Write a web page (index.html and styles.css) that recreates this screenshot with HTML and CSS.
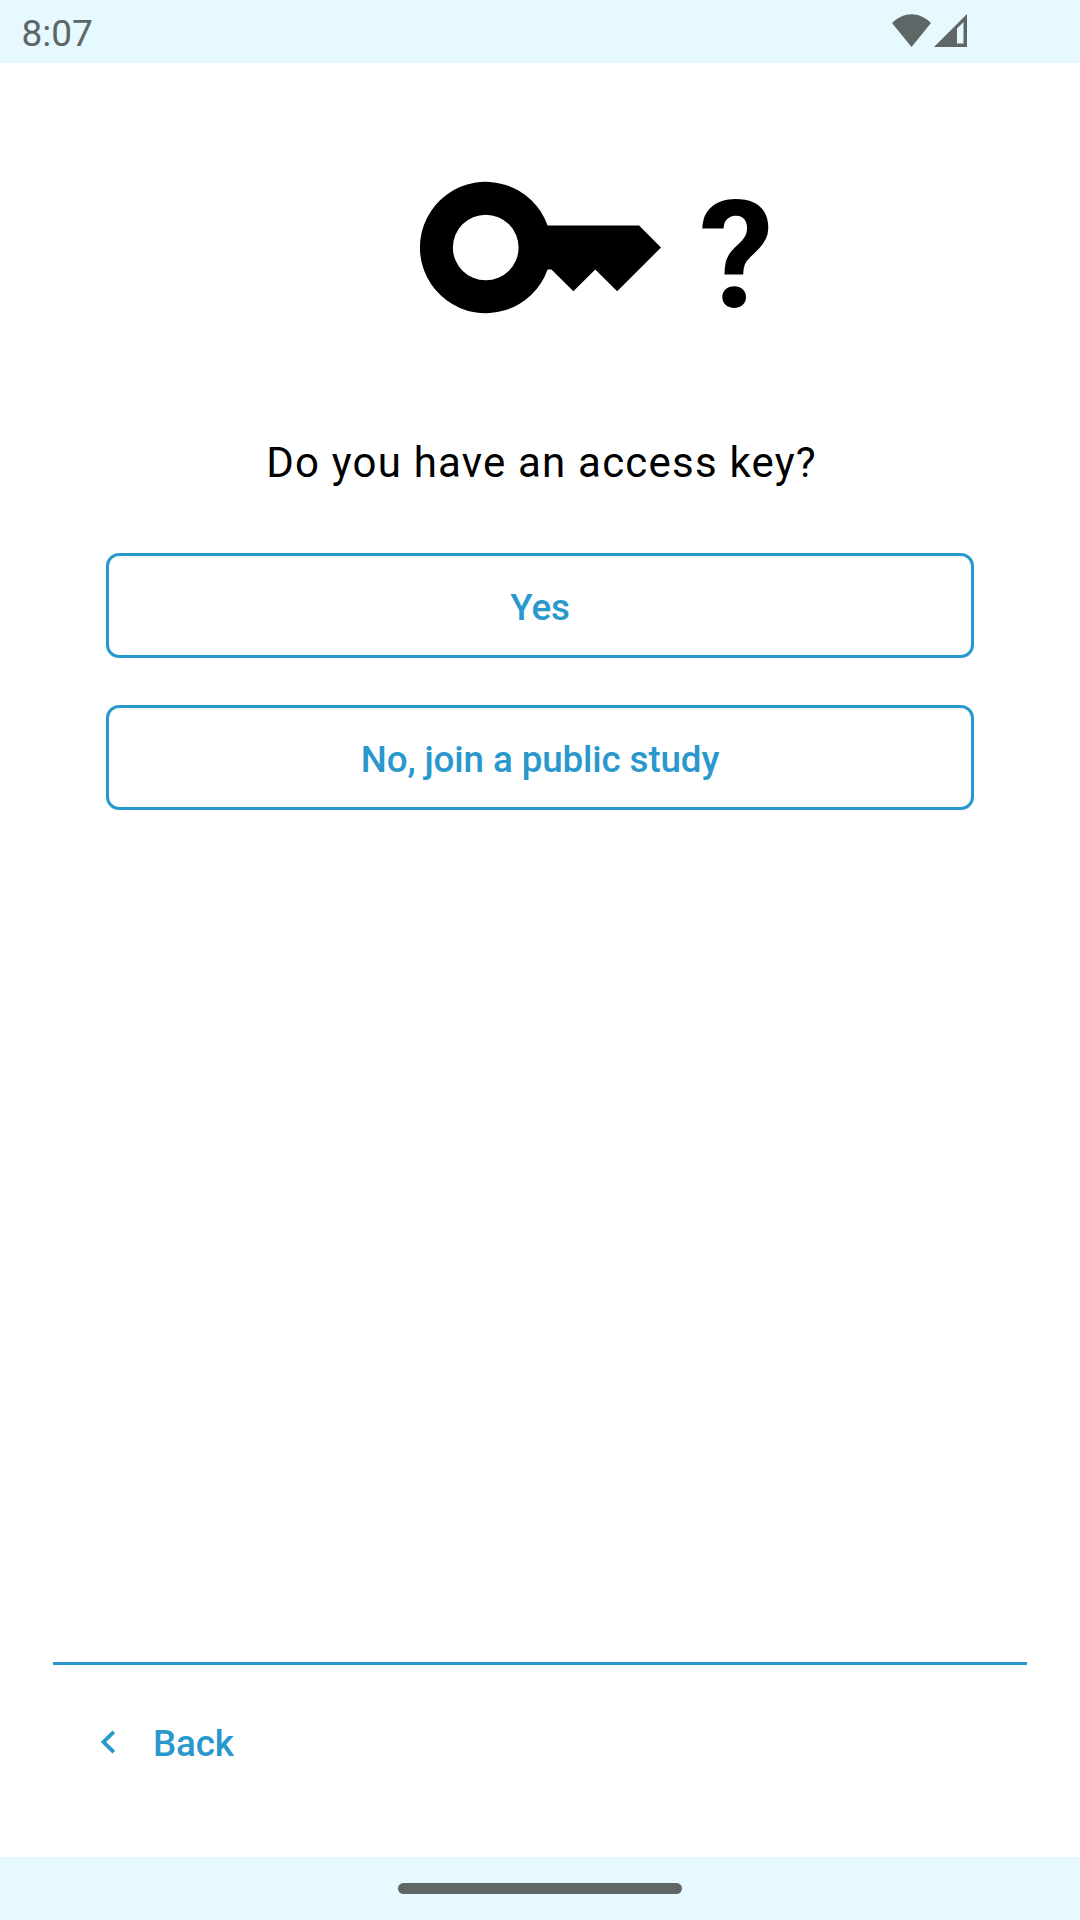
FILE: index.html
```html
<!DOCTYPE html>
<html lang="en">
<head>
<meta charset="utf-8">
<title>Access key</title>
<link rel="stylesheet" href="styles.css">
</head>
<body>
<div class="screen">
  <header class="status">
    <span class="clock">8:07</span>
    <div class="signals">
      <svg class="wifi" viewBox="0 0 39 33"><path d="M19.500 33 0 9C11.500-2.800 27.500-2.800 39 9Z"/></svg>
      <svg class="cell" viewBox="0 0 33 33"><path fill-rule="evenodd" d="M33 0V33H0ZM29.500 8 23 14.500V29.500H29.500Z"/></svg>
    </div>
  </header>
  <main class="content">
    <div class="hero">
      <svg class="key" viewBox="0 -0.045 22 12"><path fill-rule="evenodd" d="M11.650 4A6 6 0 1 0 11.650 8H12L14 10 16 8 18 10 22 6 20 4ZM6 9A3 3 0 1 1 6 3 3 3 0 0 1 6 9Z"/></svg>
      <span class="mark">?</span>
    </div>
    <h1 class="question">Do you have an access key?</h1>
    <div class="choices">
      <button class="choice">Yes</button>
      <button class="choice">No, join a public study</button>
    </div>
  </main>
  <footer class="footer">
    <button class="back">
      <svg class="chevron" viewBox="0 0 14 24"><path d="M12.800 1.800 2.500 12 12.800 22.200"/></svg>
      <span>Back</span>
    </button>
  </footer>
  <nav class="navbar"><span class="handle"></span></nav>
</div>
</body>
</html>
```
FILE: styles.css
```css
* { box-sizing: border-box; }
body { margin: 0; font-family: Roboto, sans-serif; }
svg { display: block; overflow: visible; }
.screen { display: flex; flex-direction: column; width: 1080px; height: 1920px; background: #fff; }
.status { height: 63px; background: #e5f9ff; padding: 0 113px 0 21.500px; display: flex; justify-content: space-between; color: #5f6666; }
.clock { font-size: 37px; line-height: 68px; }
.signals { display: flex; gap: 3px; padding-top: 14px; fill: #5f6666; }
.wifi { width: 39px; height: 33px; }
.cell { width: 33px; height: 33px; }
.content { flex: 1; padding: 118px 106px 0; }
.hero { display: flex; height: 132px; padding-left: 314px; }
.key { width: 241px; height: 132px; }
.mark { font-size: 150px; font-weight: 700; line-height: 150px; margin-left: 38px; }
.question { margin: 122px 0 0; padding-left: 3px; font-size: 42px; font-weight: 400; line-height: 56px; letter-spacing: 1.200px; text-align: center; }
.choices { display: flex; flex-direction: column; gap: 47px; margin-top: 62px; }
.choice { height: 105px; border: 3px solid #2998cc; border-radius: 13px; background: none; color: #2998cc; font: 500 36.750px/44px Roboto, sans-serif; letter-spacing: -0.120px; padding: 4px 0 0; }
.footer { height: 195px; margin: 0 53px; border-top: 3px solid #2998cc; }
.back { display: flex; align-items: center; margin: 55px 0 0 48px; padding: 0; border: 0; background: none; color: #2998cc; font: 500 36.750px/48px Roboto, sans-serif; letter-spacing: -0.120px; gap: 38px; }
.chevron { width: 14px; height: 24px; margin-bottom: 4px; fill: none; stroke: currentColor; stroke-width: 3.800; }
.navbar { height: 63px; background: #e5f9ff; display: flex; justify-content: center; align-items: center; }
.handle { width: 284px; height: 11px; border-radius: 6px; background: #5f6666; }
```
